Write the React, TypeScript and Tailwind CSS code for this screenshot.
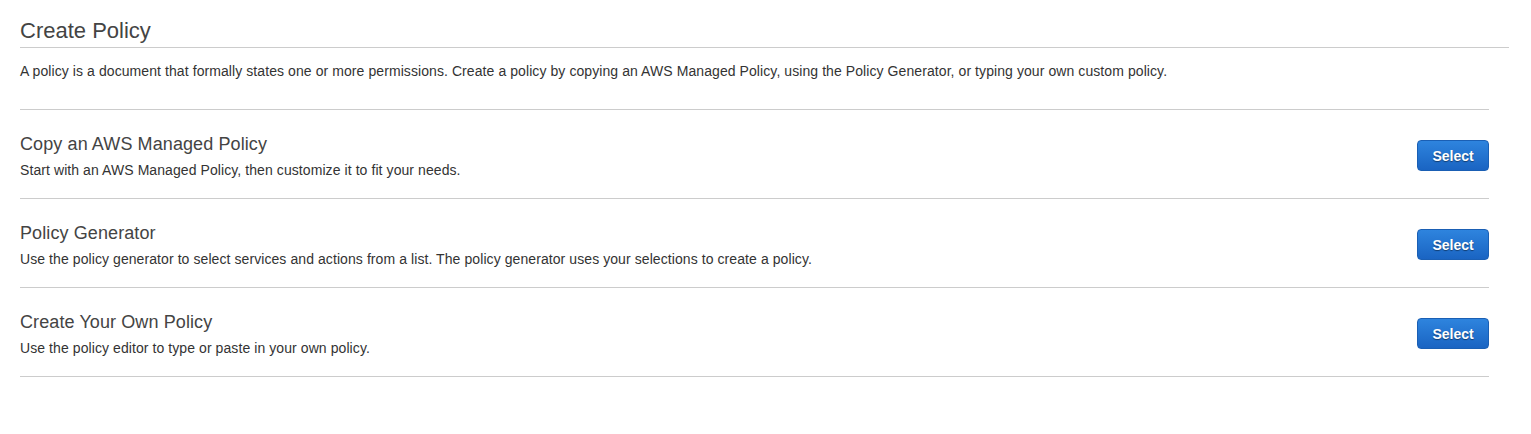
import React from "react";

const sections = [
  {
    title: "Copy an AWS Managed Policy",
    desc: "Start with an AWS Managed Policy, then customize it to fit your needs.",
  },
  {
    title: "Policy Generator",
    desc: "Use the policy generator to select services and actions from a list. The policy generator uses your selections to create a policy.",
  },
  {
    title: "Create Your Own Policy",
    desc: "Use the policy editor to type or paste in your own policy.",
  },
];

export default function App() {
  return (
    <div
      className="min-h-[434px] w-[1531px] bg-white pl-[20px] text-[#444]"
      style={{ fontFamily: '"Liberation Sans", Arial, Helvetica, sans-serif' }}
    >
      <div className="pt-[18px] w-[1489px]">
        <h1 className="text-[22px] leading-[26px] font-normal pb-[3px] border-b border-[#cccccc] text-[#444]">
          Create Policy
        </h1>
      </div>
      <div className="w-[1469px]">
        <p className="mt-[13px] text-[14px] leading-[20px] tracking-[0.08px] text-[#333] mb-[28px]">
          A policy is a document that formally states one or more permissions. Create a policy by copying an AWS Managed
          Policy, using the Policy Generator, or typing your own custom policy.
        </p>
        {sections.map((s) => (
          <div key={s.title} className="flex items-start justify-between border-t border-b-0 border-[#cccccc] last:border-b">
            <div className="pt-[22px] pb-[18px]">
              <h2 className="text-[18px] leading-[24px] tracking-[0.1px] font-normal text-[#444]">{s.title}</h2>
              <p className="mt-[4px] text-[14px] leading-[20px] tracking-[0.08px] text-[#333]">{s.desc}</p>
            </div>
            <button
              className="mt-[30px] h-[31px] w-[72px] rounded-[4px] border border-[#1a5fb4] bg-gradient-to-b from-[#2e84de] to-[#1a64c2] text-[14px] leading-[29px] pt-[1px] font-bold text-white [text-shadow:0_1px_1px_rgba(0,0,0,0.45)]"
            >
              Select
            </button>
          </div>
        ))}
      </div>
    </div>
  );
}
